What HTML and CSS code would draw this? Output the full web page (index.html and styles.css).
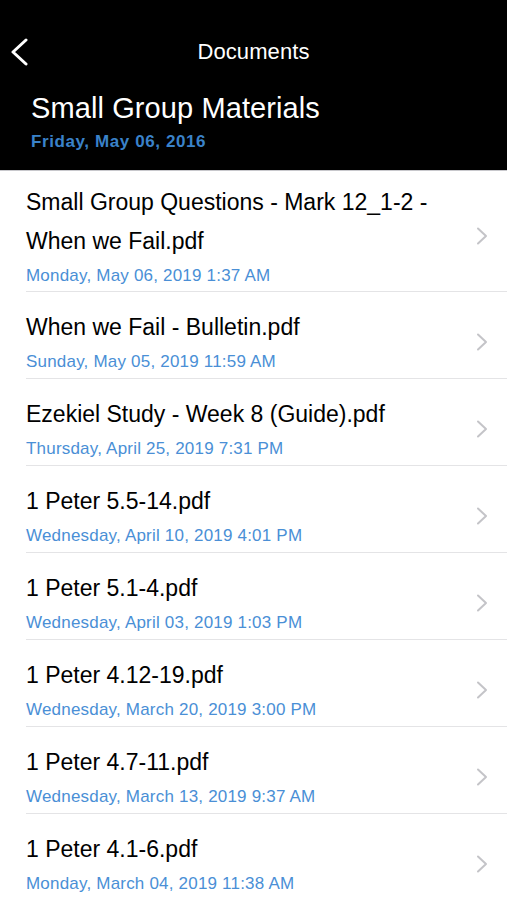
FILE: index.html
```html
<!DOCTYPE html>
<html lang="en">
<head>
    <meta charset="UTF-8">
    <meta name="viewport" content="width=device-width, initial-scale=1.0">
    <title>Documents</title>
    <link rel="stylesheet" href="styles.css">
</head>
<body>

    <header class="top">
        <div class="nav">
            <svg class="back" width="20" height="28" viewBox="0 0 20 28">
                <polyline points="16,2 3,14 16,26" fill="none" stroke="#fff" stroke-width="3" stroke-linecap="round" stroke-linejoin="round"/>
            </svg>
            <div class="nav-title">Documents</div>
        </div>
        <h1 class="folder">Small Group Materials</h1>
        <div class="folder-date">Friday, May 06, 2016</div>
    </header>

    <ul class="docs">
        <li class="doc">
            <div class="doc-text">
                <div class="doc-name">Small Group Questions - Mark 12_1-2 - When we Fail.pdf</div>
                <div class="doc-date">Monday, May 06, 2019 1:37 AM</div>
            </div>
            <svg class="arrow" width="12" height="18" viewBox="0 0 12 18"><polyline points="2,1.5 10,9 2,16.5"/></svg>
        </li>
        <li class="doc">
            <div class="doc-text">
                <div class="doc-name">When we Fail - Bulletin.pdf</div>
                <div class="doc-date">Sunday, May 05, 2019 11:59 AM</div>
            </div>
            <svg class="arrow" width="12" height="18" viewBox="0 0 12 18"><polyline points="2,1.5 10,9 2,16.5"/></svg>
        </li>
        <li class="doc">
            <div class="doc-text">
                <div class="doc-name">Ezekiel Study - Week 8 (Guide).pdf</div>
                <div class="doc-date">Thursday, April 25, 2019 7:31 PM</div>
            </div>
            <svg class="arrow" width="12" height="18" viewBox="0 0 12 18"><polyline points="2,1.5 10,9 2,16.5"/></svg>
        </li>
        <li class="doc">
            <div class="doc-text">
                <div class="doc-name">1 Peter 5.5-14.pdf</div>
                <div class="doc-date">Wednesday, April 10, 2019 4:01 PM</div>
            </div>
            <svg class="arrow" width="12" height="18" viewBox="0 0 12 18"><polyline points="2,1.5 10,9 2,16.5"/></svg>
        </li>
        <li class="doc">
            <div class="doc-text">
                <div class="doc-name">1 Peter 5.1-4.pdf</div>
                <div class="doc-date">Wednesday, April 03, 2019 1:03 PM</div>
            </div>
            <svg class="arrow" width="12" height="18" viewBox="0 0 12 18"><polyline points="2,1.5 10,9 2,16.5"/></svg>
        </li>
        <li class="doc">
            <div class="doc-text">
                <div class="doc-name">1 Peter 4.12-19.pdf</div>
                <div class="doc-date">Wednesday, March 20, 2019 3:00 PM</div>
            </div>
            <svg class="arrow" width="12" height="18" viewBox="0 0 12 18"><polyline points="2,1.5 10,9 2,16.5"/></svg>
        </li>
        <li class="doc">
            <div class="doc-text">
                <div class="doc-name">1 Peter 4.7-11.pdf</div>
                <div class="doc-date">Wednesday, March 13, 2019 9:37 AM</div>
            </div>
            <svg class="arrow" width="12" height="18" viewBox="0 0 12 18"><polyline points="2,1.5 10,9 2,16.5"/></svg>
        </li>
        <li class="doc">
            <div class="doc-text">
                <div class="doc-name">1 Peter 4.1-6.pdf</div>
                <div class="doc-date">Monday, March 04, 2019 11:38 AM</div>
            </div>
            <svg class="arrow" width="12" height="18" viewBox="0 0 12 18"><polyline points="2,1.5 10,9 2,16.5"/></svg>
        </li>
    </ul>

</body>
</html>
```

FILE: styles.css
```css
body {
    margin: 0;
    padding: 0;
    background: #fff;
    font-family: "Liberation Sans", Arial, sans-serif;
    overflow: hidden;
    height: 900px;
}

.top {
    background: #000;
    color: #fff;
    height: 140px;
    padding: 30px 0 0 0;
    border-bottom: 1px solid #c8c8cc;
}

.nav {
    height: 44px;
    display: flex;
    align-items: center;
    justify-content: center;
    position: relative;
}

.back {
    position: absolute;
    left: 10px;
    top: 8px;
}

.nav-title {
    font-size: 22px;
    line-height: 44px;
    letter-spacing: 0.1px;
}

.folder {
    margin: 17px 0 0 31px;
    font-size: 29px;
    font-weight: normal;
    line-height: 34px;
    letter-spacing: 0.1px;
}

.folder-date {
    margin: 6px 0 0 31px;
    font-size: 17px;
    font-weight: bold;
    line-height: 22px;
    letter-spacing: 0.6px;
    color: #3a82c9;
}

.docs {
    list-style: none;
    margin: 0;
    padding: 0;
}

.doc {
    display: flex;
    align-items: center;
    margin-left: 26px;
    padding: 16px 19px 1px 0;
    border-bottom: 1px solid #e4e4e6;
}

.doc:first-child {
    padding-top: 12px;
    padding-bottom: 0;
}

.doc-text {
    flex: 1;
    padding-right: 10px;
}

.doc-name {
    font-size: 23px;
    line-height: 39px;
    color: #000;
}

.doc-date {
    font-size: 17px;
    line-height: 30px;
    letter-spacing: 0.2px;
    color: #4a8fd6;
}

.arrow {
    flex: none;
    margin-top: -2px;
}

.arrow polyline {
    fill: none;
    stroke: #c4c4c8;
    stroke-width: 2;
    stroke-linecap: round;
    stroke-linejoin: round;
}
```
